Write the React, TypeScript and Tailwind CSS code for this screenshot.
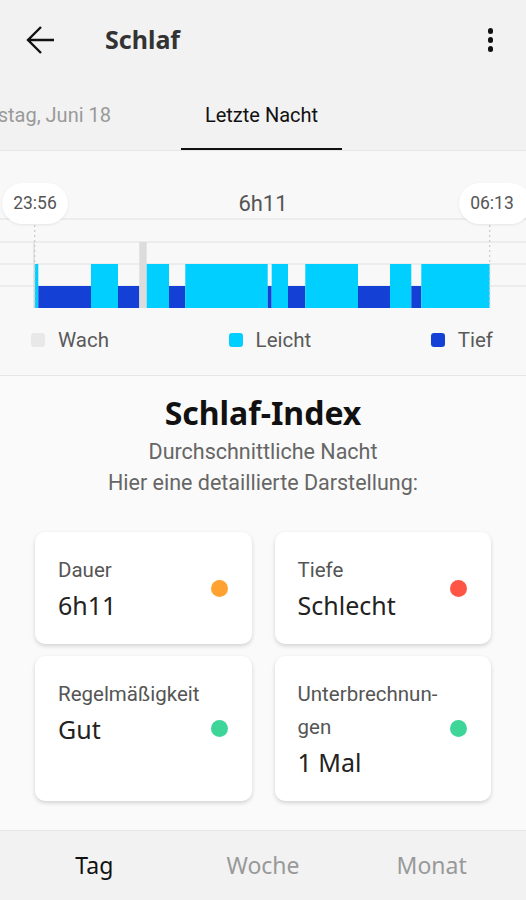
const roboto = { fontFamily: "Roboto, 'Liberation Sans', sans-serif" };

type Seg = { x0: number; x1: number; kind: "light" | "deep" | "awake" };

const segments: Seg[] = [
  { x0: 34.7, x1: 38.3, kind: "light" },
  { x0: 38.3, x1: 91, kind: "deep" },
  { x0: 91, x1: 118, kind: "light" },
  { x0: 118, x1: 139.3, kind: "deep" },
  { x0: 139.3, x1: 146.7, kind: "awake" },
  { x0: 146.7, x1: 169, kind: "light" },
  { x0: 169, x1: 185.3, kind: "deep" },
  { x0: 185.3, x1: 267.7, kind: "light" },
  { x0: 267.7, x1: 271.7, kind: "deep" },
  { x0: 271.7, x1: 288, kind: "light" },
  { x0: 288, x1: 305.3, kind: "deep" },
  { x0: 305.3, x1: 358, kind: "light" },
  { x0: 358, x1: 390, kind: "deep" },
  { x0: 390, x1: 411.3, kind: "light" },
  { x0: 411.3, x1: 421.3, kind: "deep" },
  { x0: 421.3, x1: 489.7, kind: "light" },
];

const fills = { light: "#00cfff", deep: "#1540d6", awake: "#dcdcdc" };
const tops = { light: 113, deep: 135, awake: 91 };

const cards = [
  { label: ["Dauer"], value: "6h11", dot: "#ffa230" },
  { label: ["Tiefe"], value: "Schlecht", dot: "#ff5546" },
  { label: ["Regelmäßigkeit"], value: "Gut", dot: "#3dd598" },
  { label: ["Unterbrechnun-", "gen"], value: "1 Mal", dot: "#3dd598" },
];

function SleepChart() {
  return (
    <div className="relative h-[160px]">
      <svg width="526" height="160" className="absolute inset-0">
        {[68, 91, 113, 135].map((y) => (
          <line key={y} x1="0" x2="526" y1={y} y2={y} stroke="#e8e8e8" strokeWidth="1.5" />
        ))}
        {segments.map((s, i) => (
          <rect
            key={i}
            x={s.x0}
            y={tops[s.kind]}
            width={s.x1 - s.x0}
            height={157 - tops[s.kind]}
            fill={fills[s.kind]}
          />
        ))}
        <rect x="33.3" y="91" width="1.4" height="66" fill="#dcdcdc" />
        <line x1="34.7" x2="34.7" y1="74" y2="157" stroke="#c8c8c8" strokeWidth="1.2" strokeDasharray="2 3" />
        <line x1="489.7" x2="489.7" y1="74" y2="157" stroke="#c8c8c8" strokeWidth="1.2" strokeDasharray="2 3" />
      </svg>
      <div
        className="absolute left-[2px] top-[32px] flex h-[41px] w-[66px] items-center justify-center rounded-full bg-white text-[17.5px] text-[#555] shadow-[0_1px_3px_rgba(0,0,0,0.08)]"
        style={roboto}
      >
        23:56
      </div>
      <div
        className="absolute left-[459px] top-[32px] flex h-[41px] w-[72px] items-center justify-center rounded-full bg-white pr-[6px] text-[17.5px] text-[#555] shadow-[0_1px_3px_rgba(0,0,0,0.08)]"
        style={roboto}
      >
        06:13
      </div>
      <div className="absolute left-0 right-0 top-[39px] text-center text-[22px] leading-[28px] text-[#555]" style={roboto}>
        6h11
      </div>
    </div>
  );
}

function Legend() {
  const items = [
    { name: "Wach", color: "#e8e8e8" },
    { name: "Leicht", color: "#00cfff" },
    { name: "Tief", color: "#1540d6" },
  ];
  return (
    <div className="mt-[15px] flex h-[28px] items-center justify-between pl-[31px] pr-[33px]" style={roboto}>
      {items.map((it) => (
        <div key={it.name} className="flex items-center gap-[13px]">
          <span className="h-[14px] w-[14px] rounded-[3px]" style={{ backgroundColor: it.color }} />
          <span className="text-[20.5px] text-[#5a5a5a]">{it.name}</span>
        </div>
      ))}
    </div>
  );
}

export default function App() {
  return (
    <div className="flex h-[900px] w-[526px] flex-col overflow-hidden bg-[#fafafa]" style={{ fontFamily: "'Noto Sans', 'Open Sans', sans-serif" }}>
      <header className="bg-[#f2f2f2]">
        <div className="flex h-[80px] items-center">
          <svg width="30" height="30" viewBox="0 0 30 30" className="ml-[26px]">
            <path d="M28 15H3M15 2L2 15l13 13" fill="none" stroke="#111" strokeWidth="2.4" />
          </svg>
          <h1 className="ml-[49px] text-[25px] font-bold text-[#333]">Schlaf</h1>
          <div className="ml-auto mr-[33px] flex flex-col gap-[3.5px]">
            <span className="h-[5.5px] w-[5.5px] rounded-full bg-[#111]" />
            <span className="h-[5.5px] w-[5.5px] rounded-full bg-[#111]" />
            <span className="h-[5.5px] w-[5.5px] rounded-full bg-[#111]" />
          </div>
        </div>
        <nav className="flex h-[70px] overflow-hidden text-[20px]" style={roboto}>
          <div className="flex w-[181px] shrink-0 items-center justify-end whitespace-nowrap pr-[70px] text-[#9a9a9a]">
            Dienstag, Juni 18
          </div>
          <div className="flex w-[161px] shrink-0 items-center justify-center border-b-2 border-[#111] pt-[2px] text-[#111]">
            Letzte Nacht
          </div>
        </nav>
      </header>

      <section className="h-[226px] border-y border-[#e6e6e6] bg-[#f8f8f8]">
        <SleepChart />
        <Legend />
      </section>

      <main className="flex-1 px-[35px] pt-[17px]">
        <h2 className="text-center text-[32px] font-bold leading-[40px] text-[#111]">Schlaf-Index</h2>
        <div className="mt-[3px] text-center text-[21.5px] leading-[31px] text-[#666]" style={roboto}>
          <p>Durchschnittliche Nacht</p>
          <p>Hier eine detaillierte Darstellung:</p>
        </div>

        <div className="mt-[34px] grid grid-cols-2 gap-x-[23px] gap-y-[12px]">
          {cards.map((c) => (
            <div
              key={c.value}
              className="flex justify-between rounded-[10px] bg-white py-[21.5px] pl-[23px] pr-[24px] shadow-[0_2px_4px_rgba(0,0,0,0.16)]"
            >
              <div>
                <div className="text-[20.5px] leading-[33px] text-[#555]" style={roboto}>
                  {c.label.map((l) => (
                    <div key={l}>{l}</div>
                  ))}
                </div>
                <div className="text-[25px] leading-[36px] text-[#222]">{c.value}</div>
              </div>
              <span className="h-[17px] w-[17px] shrink-0 self-center rounded-full" style={{ backgroundColor: c.dot }} />
            </div>
          ))}
        </div>
      </main>

      <footer className="flex h-[70px] items-center border-t border-[#e6e6e6] bg-[#f2f2f2] px-[10px] text-[23px]">
        <div className="flex-1 text-center text-[#111]">Tag</div>
        <div className="flex-1 text-center text-[#999]">Woche</div>
        <div className="flex-1 text-center text-[#999]">Monat</div>
      </footer>
    </div>
  );
}
